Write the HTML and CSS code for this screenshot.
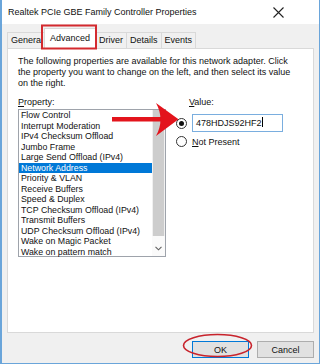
FILE: index.html
```html
<html>
<head>
	<title>Realtek PCIe GBE Family Controller Properties</title>
<link rel="stylesheet" href="styles.css">
</head>
<body>

	<div class="window">

		<div class="titlebar">
			<span class="title">Realtek PCIe GBE Family Controller Properties</span>
			<svg class="close" width="11" height="11" viewBox="0 0 11 11">
				<path d="M0.5 0.5 L10.5 10.5 M10.5 0.5 L0.5 10.5" stroke="#222" stroke-width="1.1" fill="none"/>
			</svg>
		</div>

		<div class="frame">

			<div class="tabs">
				<div class="tab">General</div>
				<div class="tab active">Advanced</div>
				<div class="tab">Driver</div>
				<div class="tab">Details</div>
				<div class="tab">Events</div>
			</div>

			<div class="panel">
				<p class="intro">The following properties are available for this network adapter. Click the property you want to change on the left, and then select its value on the right.</p>

				<div class="cols">
					<div class="left">
						<div class="label"><u>P</u>roperty:</div>
						<div class="listbox">
							<ul class="items">
								<li>Flow Control</li>
								<li>Interrupt Moderation</li>
								<li>IPv4 Checksum Offload</li>
								<li>Jumbo Frame</li>
								<li>Large Send Offload (IPv4)</li>
								<li class="selected">Network Address</li>
								<li>Priority &amp; VLAN</li>
								<li>Receive Buffers</li>
								<li>Speed &amp; Duplex</li>
								<li>TCP Checksum Offload (IPv4)</li>
								<li>Transmit Buffers</li>
								<li>UDP Checksum Offload (IPv4)</li>
								<li>Wake on Magic Packet</li>
								<li>Wake on pattern match</li>
							</ul>
							<div class="scrollbar">
								<div class="thumb"></div>
								<div class="arrow">
									<svg width="7" height="5" viewBox="0 0 7 5">
										<path d="M0.5 0.8 L3.5 3.8 L6.5 0.8" stroke="#606060" stroke-width="1.1" fill="none"/>
									</svg>
								</div>
							</div>
						</div>
					</div>

					<div class="right">
						<div class="label value-label"><u>V</u>alue:</div>
						<div class="option">
							<span class="radio checked"></span>
							<div class="textbox">478HDJS92HF2<span class="caret"></span></div>
						</div>
						<div class="option">
							<span class="radio"></span>
							<span><u>N</u>ot Present</span>
						</div>
					</div>
				</div>
			</div>

			<div class="buttons">
				<button class="btn default">OK</button>
				<button class="btn">Cancel</button>
			</div>

		</div>

		<!-- annotations drawn over the dialog -->
		<svg class="marks" width="320" height="364" viewBox="0 0 320 364">
			<rect x="42" y="25.5" width="54" height="23" fill="none" stroke="#d42a2f" stroke-width="2"/>
			<path d="M112 117 L162 117 L162 121.5 L112 121.5 Z" fill="#e3141c"/>
			<path d="M156 103 L178.5 119.3 L156 136 Q165 119.3 156 103 Z" fill="#e3141c"/>
			<ellipse cx="217.5" cy="345.5" rx="34" ry="11" fill="none" stroke="#c8232c" stroke-width="1.6"/>
		</svg>

	</div>

</body>
</html>
```

FILE: styles.css
```css
body {
	margin: 0;
	background: #fff;
	font-family: "Liberation Sans", Arial, sans-serif;
	font-size: 9px;
	color: #111;
}

.window {
	position: relative;
	width: 320px;
	height: 364px;
	box-sizing: border-box;
	border: 1px solid #6aa5da;
	border-top: none;
	border-left-width: 2px;
	display: flex;
	flex-direction: column;
	background: #f0f0f0;
}

.titlebar {
	height: 24px;
	background: #fff;
	display: flex;
	align-items: center;
	justify-content: space-between;
	padding: 0 35px 0 6px;
	flex-shrink: 0;
}

.title {
	font-size: 9px;
	color: #111;
}

.close {
	margin-top: 1px;
}

.frame {
	flex: 1;
	display: flex;
	flex-direction: column;
	padding: 0 5px 0 5px;
}

.tabs {
	display: flex;
	align-items: flex-end;
	height: 24px;
	position: relative;
	z-index: 1;
}

.tab {
	height: 15px;
	line-height: 15px;
	padding: 0 3px;
	border: 1px solid #d9d9d9;
	border-bottom: none;
	margin-right: -1px;
	background: #f0f0f0;
	margin-bottom: 0;
}

.tab:first-child {
	width: 30px;
	overflow: hidden;
}

.tab.active {
	height: 20px;
	line-height: 18px;
	background: #fff;
	padding: 0 5px;
	margin-bottom: -1px;
	position: relative;
	z-index: 2;
}

.panel {
	background: #fff;
	border: 1px solid #d9d9d9;
	height: 285px;
	box-sizing: border-box;
	padding: 7px 10px 0 10px;
}

.intro {
	margin: 0;
	line-height: 10.8px;
	padding-right: 12px;
}

.cols {
	display: flex;
	margin-top: 9px;
}

.left {
	width: 148px;
}

.right {
	margin-left: 10px;
	padding-top: 0;
}

.label {
	line-height: 10px;
	height: 12px;
}

.value-label {
	margin-left: 13px;
}

.listbox {
	display: flex;
	height: 148px;
	box-sizing: border-box;
	border: 1px solid #9ea3ab;
}

.items {
	list-style: none;
	margin: 0;
	padding: 0;
	flex: 1;
	font-size: 8.8px;
}

.items li {
	height: 10.5px;
	line-height: 10.5px;
	padding-left: 2px;
	white-space: nowrap;
}

.items li.selected {
	background: #0078d7;
	color: #fff;
}

.scrollbar {
	width: 13px;
	display: flex;
	flex-direction: column;
	background: #f0f0f0;
}

.thumb {
	height: 126px;
	background: #cdcdcd;
	margin: 0 1px;
}

.arrow {
	flex: 1;
	display: flex;
	align-items: flex-end;
	justify-content: center;
	padding-bottom: 5px;
	background: #fafafa;
}

.option {
	display: flex;
	align-items: center;
	gap: 5px;
	margin-top: 5px;
}

.option + .option {
	margin-top: 4px;
}

.radio {
	width: 9px;
	height: 9px;
	border: 1px solid #333;
	border-radius: 50%;
	display: flex;
	align-items: center;
	justify-content: center;
	background: #fff;
}

.radio.checked::after {
	content: "";
	width: 5px;
	height: 5px;
	border-radius: 50%;
	background: #111;
}

.textbox {
	width: 91px;
	height: 18px;
	line-height: 16px;
	box-sizing: border-box;
	border: 1px solid #7aaedf;
	padding-left: 3px;
}

.caret {
	display: inline-block;
	width: 1px;
	height: 10px;
	background: #000;
	vertical-align: -1px;
}

.buttons {
	display: flex;
	justify-content: flex-end;
	gap: 8px;
	padding-top: 8px;
	padding-right: 0;
}

.btn {
	width: 57px;
	height: 17px;
	background: #e1e1e1;
	border: 1px solid #adadad;
	font-family: "Liberation Sans", Arial, sans-serif;
	font-size: 9px;
	color: #111;
	padding: 0;
}

.btn.default {
	border-color: #0078d7;
}

.marks {
	position: absolute;
	left: -2px;
	top: 0;
	pointer-events: none;
	z-index: 5;
}
```
